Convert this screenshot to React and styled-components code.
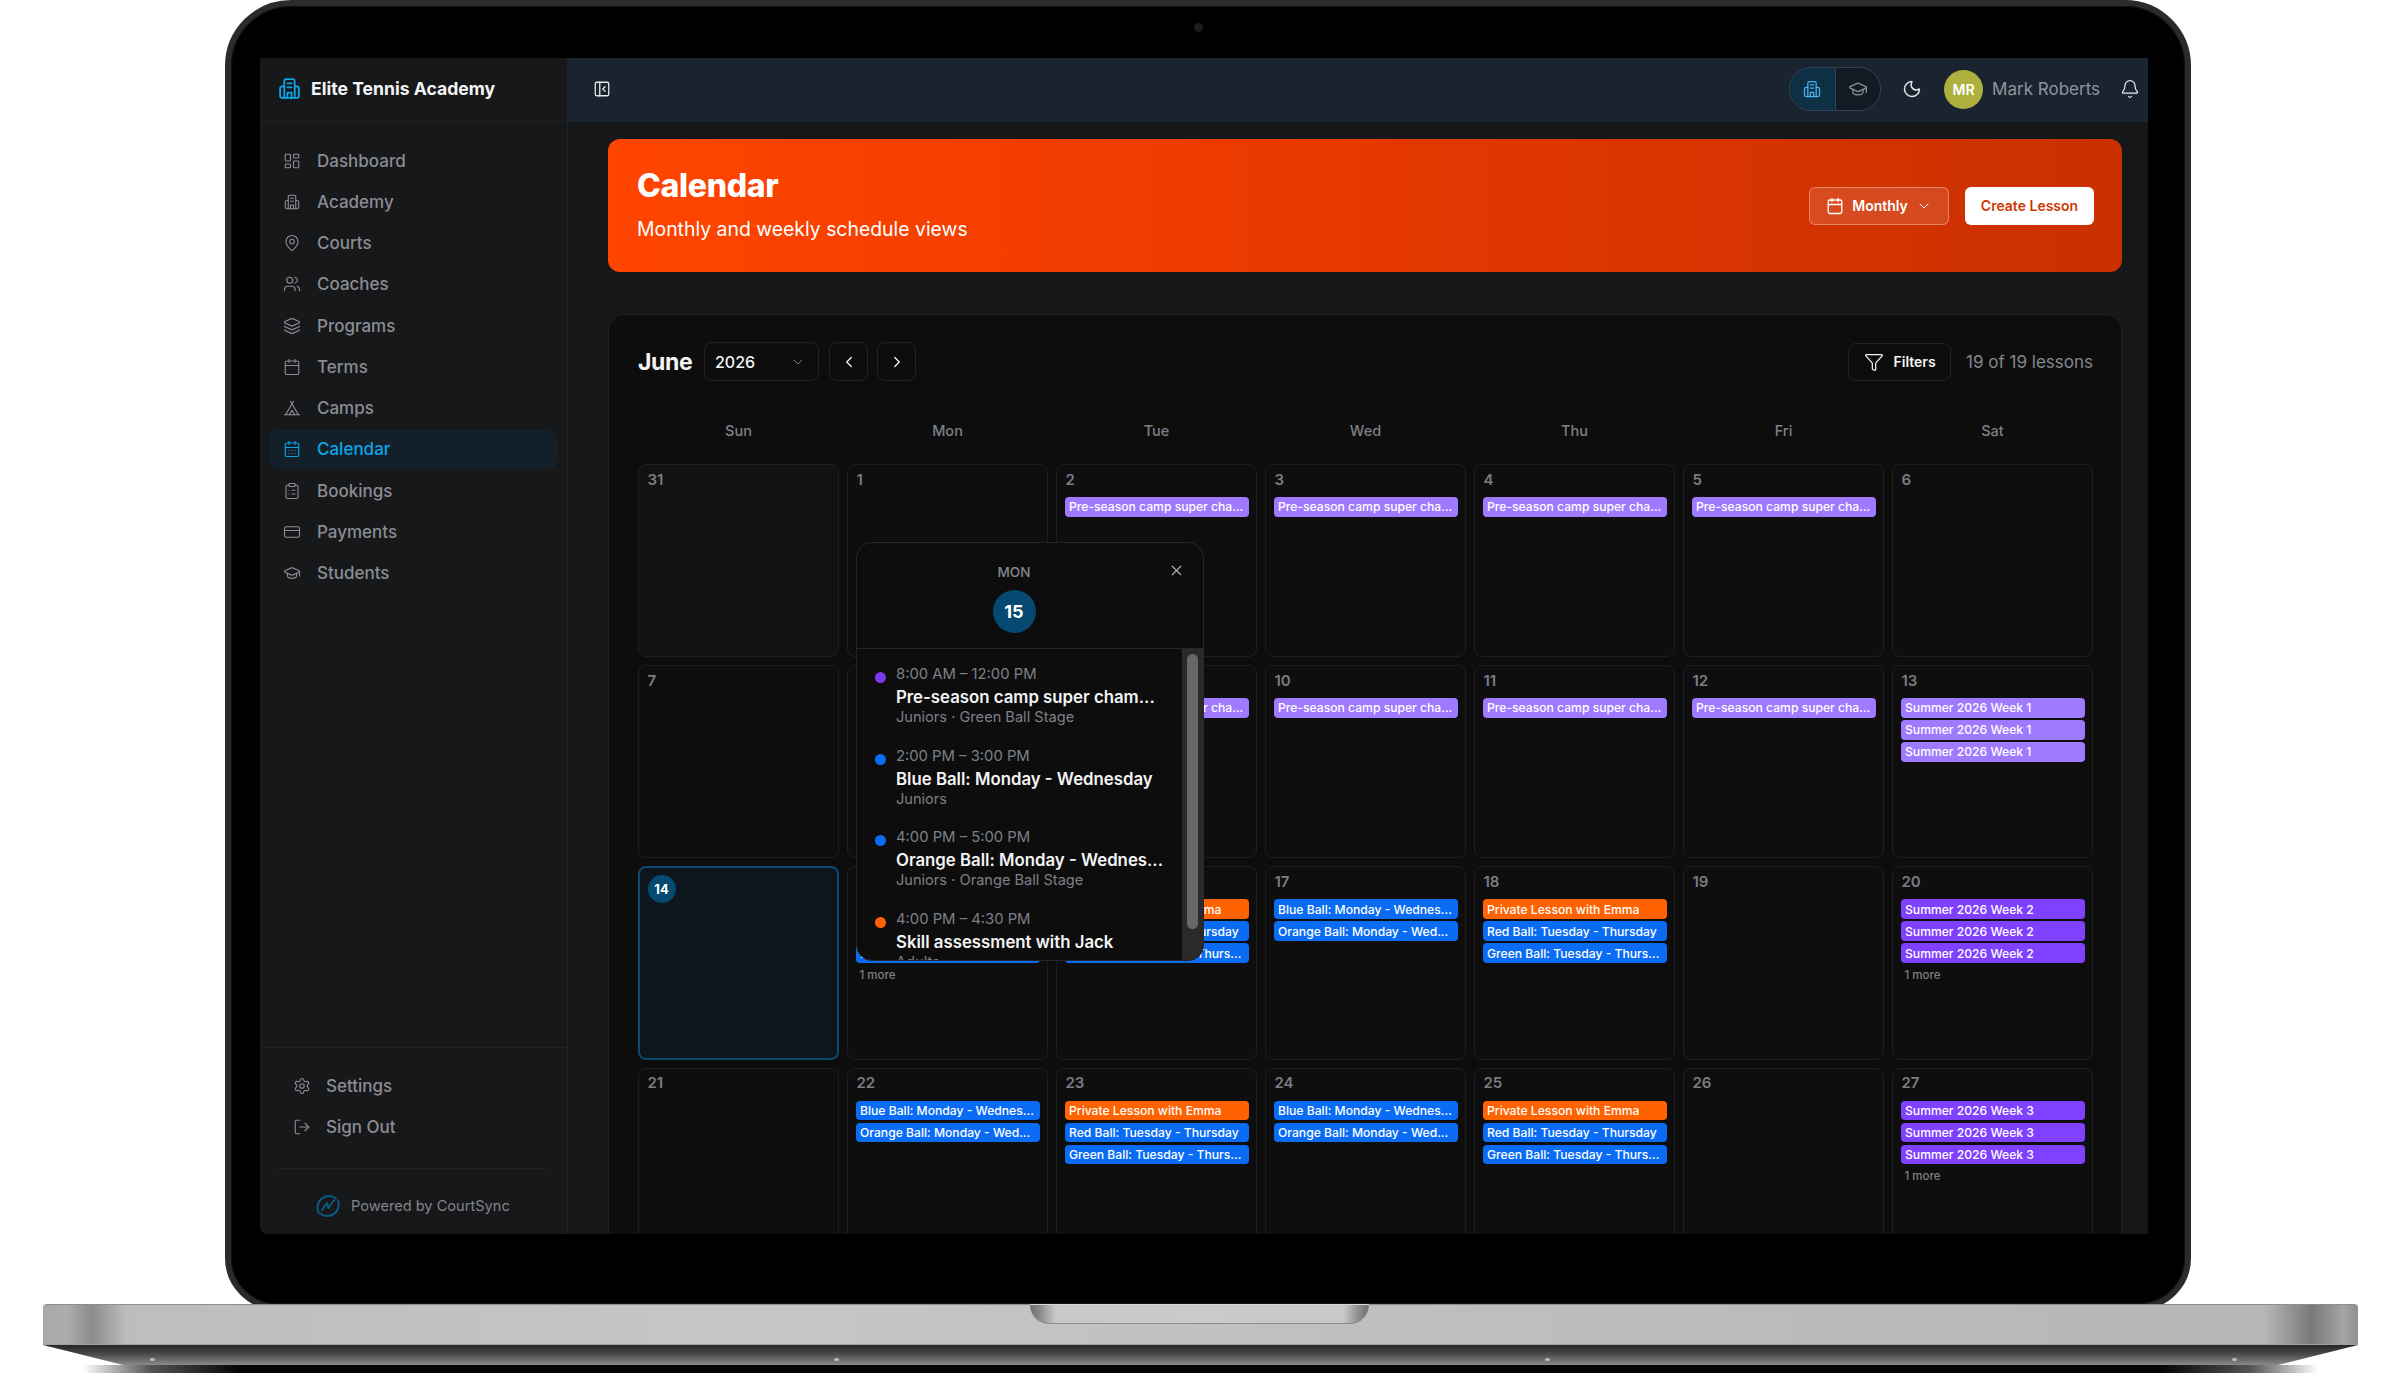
import React from 'react';
import styled, { createGlobalStyle } from 'styled-components';
import {
  LayoutDashboard, MapPin, Users, Layers, Calendar, Tent, CalendarDays, ClipboardList,
  CreditCard, GraduationCap, Settings, LogOut, PanelLeftClose, Moon, Bell, Funnel,
  ChevronDown, ChevronLeft, ChevronRight, X
} from 'lucide-react';

const GlobalStyle = createGlobalStyle`
  html, body {
    margin: 0;
    background: #fff;
    font-family: Inter, 'Noto Sans', sans-serif;
  }
  * { box-sizing: border-box; }
`;

const Stage = styled.div`
  width: 2401px;
  height: 1376px;
  overflow: hidden;
  display: flex;
  flex-direction: column;
  background: #fff;
`;

const Lid = styled.div`
  position: relative;
  margin-left: 225px;
  width: 1966px;
  height: 1310px;
  flex: none;
  background: #000;
  border: 6px solid #2b2b2b;
  border-radius: 66px 66px 52px 52px;
  box-shadow: inset 0 0 0 1px #111;
  padding: 52px 37px 0 29px;
`;

const Camera = styled.div`
  position: absolute;
  left: 963px;
  top: 17px;
  width: 9px;
  height: 9px;
  border-radius: 50%;
  background: #1b1b1d;
`;

const Screen = styled.div`
  width: 1888px;
  height: 1176px;
  display: flex;
  overflow: hidden;
  border-radius: 0 0 0 8px;
  background: #161719;
`;

const Sidebar = styled.aside`
  width: 308px;
  flex: none;
  display: flex;
  flex-direction: column;
  background: #17181a;
  border-right: 1px solid #212224;
`;

const Brand = styled.div`
  height: 64px;
  flex: none;
  display: flex;
  align-items: center;
  gap: 9px;
  padding: 0 0 3px 17px;
  border-bottom: 1px solid #212224;
  color: #0ea5e9;
`;

const BrandName = styled.span`
  color: #f4f4f5;
  font-size: 17.6px;
  font-weight: 700;
`;

const Nav = styled.nav`
  display: flex;
  flex-direction: column;
  gap: 2.25px;
  padding: 19px 10px 0 9px;
`;

const NavItem = styled.div`
  height: 39px;
  display: flex;
  align-items: center;
  gap: 16px;
  padding-left: 14px;
  border-radius: 8px;
  font-size: 17px;
  font-weight: 500;
  color: ${({ $active }) => ($active ? '#0ea5e9' : '#8a8d93')};
  background: ${({ $active }) => ($active ? '#13202a' : 'transparent')};
`;

const SideFooter = styled.div`
  margin-top: auto;
  height: 187px;
  flex: none;
  padding: 18px 19px 0 17px;
  border-top: 1px solid #212224;
`;

const FooterItem = styled.div`
  height: 40px;
  margin-bottom: 1px;
  display: flex;
  align-items: center;
  gap: 15px;
  padding-left: 16px;
  font-size: 17px;
  font-weight: 500;
  color: #8a8d93;
`;

const Powered = styled.div`
  margin-top: 21px;
  padding: 24px 0 0 38px;
  border-top: 1px solid #212224;
  display: flex;
  align-items: center;
  gap: 10px;
  font-size: 14.6px;
  color: #82858b;
`;

const Content = styled.div`
  flex: 1;
  min-width: 0;
  display: flex;
  flex-direction: column;
`;

const Topbar = styled.header`
  height: 64px;
  flex: none;
  display: flex;
  align-items: center;
  padding: 0 8px 2px 25px;
  background: #1a2430;
  color: #e5e7eb;
`;

const Toggle = styled.div`
  margin-left: auto;
  width: 92px;
  height: 44px;
  display: flex;
  overflow: hidden;
  border: 1px solid #334356;
  border-radius: 22px;
`;

const ToggleSide = styled.div`
  flex: 1;
  display: flex;
  align-items: center;
  justify-content: center;
  background: ${({ $active }) => ($active ? '#0e3045' : '#111b24')};
  color: ${({ $active }) => ($active ? '#4fb3ef' : '#8b929a')};
  & + & { border-left: 1px solid #334356; }
`;

const ThemeButton = styled.div`
  margin-left: 21px;
  display: flex;
  color: #e5e7eb;
`;

const Avatar = styled.div`
  margin-left: 22px;
  width: 39px;
  height: 39px;
  border-radius: 50%;
  display: flex;
  align-items: center;
  justify-content: center;
  background: #aeb03e;
  color: #fff;
  font-size: 14px;
  font-weight: 600;
`;

const UserName = styled.span`
  margin-left: 9px;
  font-size: 17px;
  color: #8e949c;
`;

const BellButton = styled.div`
  margin-left: 20px;
  display: flex;
  color: #e5e7eb;
`;

const Main = styled.main`
  flex: 1;
  min-height: 0;
  padding: 17px 26px 0 40px;
`;

const Banner = styled.section`
  height: 133px;
  display: flex;
  align-items: center;
  justify-content: space-between;
  padding: 0 28px 0 29px;
  border-radius: 12px;
  background: linear-gradient(90deg, #ff4500 0%, #f03c00 35%, #d83400 70%, #c93000 100%);
  color: #fff;
`;

const BannerTitle = styled.h1`
  margin: -3px 0 13px;
  font-size: 32px;
  line-height: 36px;
  font-weight: 800;
  letter-spacing: -0.3px;
`;

const BannerSub = styled.p`
  margin: 0;
  font-size: 19.4px;
  line-height: 24px;
`;

const BannerActions = styled.div`
  display: flex;
  gap: 16px;
`;

const ViewButton = styled.div`
  width: 140px;
  height: 38px;
  display: flex;
  align-items: center;
  justify-content: center;
  gap: 8px;
  border: 1px solid rgba(255, 255, 255, 0.32);
  border-radius: 6px;
  background: rgba(255, 255, 255, 0.12);
  font-size: 14px;
  font-weight: 600;
`;

const CreateButton = styled.div`
  width: 129px;
  height: 38px;
  display: flex;
  align-items: center;
  justify-content: center;
  border-radius: 6px;
  background: #fff;
  color: #d23600;
  font-size: 14px;
  font-weight: 600;
`;

const Card = styled.section`
  position: relative;
  margin-top: 42px;
  height: 940px;
  padding: 27px 28px 0 29px;
  background: #0d0d0e;
  border: 1px solid #1e1f21;
  border-radius: 16px;
`;

const Toolbar = styled.div`
  height: 39px;
  display: flex;
  align-items: center;
  color: #f4f4f5;
`;

const Month = styled.h2`
  margin: 0 11px 0 0;
  font-size: 23px;
  font-weight: 700;
  width: 55px;
  letter-spacing: -0.4px;
`;

const YearSelect = styled.div`
  width: 115px;
  height: 39px;
  display: flex;
  align-items: center;
  justify-content: space-between;
  padding: 0 12px 0 10px;
  border: 1px solid #222325;
  border-radius: 8px;
  font-size: 16px;
  font-weight: 500;
  color: #f4f4f5;
  svg { color: #7d8086; }
`;

const NavButton = styled.div`
  width: 39px;
  height: 39px;
  margin-left: ${({ $first }) => ($first ? '10px' : '9px')};
  display: flex;
  align-items: center;
  justify-content: center;
  border: 1px solid #222325;
  border-radius: 8px;
`;

const FilterButton = styled.div`
  margin-left: auto;
  width: 103px;
  height: 38px;
  display: flex;
  align-items: center;
  justify-content: center;
  gap: 10px;
  border: 1px solid #222325;
  border-radius: 8px;
  font-size: 14px;
  font-weight: 600;
`;

const LessonCount = styled.span`
  margin-left: 15px;
  font-size: 17px;
  color: #84878d;
`;

const Weekdays = styled.div`
  display: grid;
  grid-template-columns: repeat(7, 1fr);
  column-gap: 8px;
  margin-top: 32px;
  height: 51px;
`;

const Weekday = styled.div`
  height: 34px;
  display: flex;
  align-items: center;
  justify-content: center;
  font-size: 14.5px;
  font-weight: 500;
  color: #7d8086;
`;

const Grid = styled.div`
  display: grid;
  grid-template-columns: repeat(7, 1fr);
  grid-auto-rows: 193.2px;
  gap: 8px;
`;

const Cell = styled.div`
  padding: 4px 7.5px 0;
  border-radius: 8px;
  border: ${({ $today }) => ($today ? '2px solid #0c4a6e' : '1.5px solid #1d1e20')};
  background: ${({ $today, $muted }) => ($today ? '#0c161c' : $muted ? '#121213' : '#0e0e0f')};
`;

const DayNumber = styled.div`
  height: 20px;
  margin-bottom: 8px;
  padding-left: 1px;
  display: flex;
  align-items: center;
  font-size: 15px;
  font-weight: 600;
  color: #7a7d83;
`;

const TodayNumber = styled.div`
  margin-top: 3px;
  width: 28px;
  height: 28px;
  border-radius: 50%;
  display: flex;
  align-items: center;
  justify-content: center;
  background: #064a72;
  color: #fff;
  font-size: 13px;
  font-weight: 700;
`;

const eventColors = {
  light: '#9f7aff',
  violet: '#7f40ff',
  blue: '#0a6cf5',
  orange: '#ff6200'
};

const Events = styled.div`
  display: flex;
  flex-direction: column;
  gap: 2.5px;
`;

const EventPill = styled.div`
  height: 19.5px;
  padding: 0 4.5px;
  display: flex;
  align-items: center;
  overflow: hidden;
  white-space: nowrap;
  border-radius: 4px;
  background: ${({ $tone }) => eventColors[$tone]};
  color: #fff;
  font-size: 12.15px;
  font-weight: 500;
`;

const More = styled.div`
  margin-top: 5px;
  padding-left: 4px;
  font-size: 11.5px;
  line-height: 15px;
  font-weight: 500;
  color: #7d8086;
`;

const Popover = styled.div`
  position: absolute;
  left: 247px;
  top: 227px;
  width: 348px;
  height: 419px;
  display: flex;
  flex-direction: column;
  overflow: hidden;
  background: #0d0d0e;
  border: 1px solid #252628;
  border-radius: 16px;
`;

const PopoverHead = styled.div`
  position: relative;
  height: 106px;
  flex: none;
  display: flex;
  flex-direction: column;
  align-items: center;
  padding: 20px 32px 0 0;
  border-bottom: 1px solid #252628;
`;

const PopoverDay = styled.div`
  font-size: 13.5px;
  line-height: 18px;
  font-weight: 500;
  color: #84878d;
`;

const PopoverDate = styled.div`
  margin-top: 9px;
  width: 43px;
  height: 43px;
  border-radius: 50%;
  display: flex;
  align-items: center;
  justify-content: center;
  background: #064a72;
  color: #fff;
  font-size: 18px;
  font-weight: 700;
`;

const CloseButton = styled.div`
  position: absolute;
  top: 19px;
  right: 18px;
  display: flex;
  color: #b4b6ba;
`;

const PopoverBody = styled.div`
  flex: 1;
  min-height: 0;
  display: flex;
`;

const LessonList = styled.div`
  flex: 1;
  overflow: hidden;
  display: flex;
  flex-direction: column;
  gap: 19.6px;
  padding: 15px 0 0 18px;
`;

const Lesson = styled.div`
  display: flex;
  gap: 10px;
  flex: none;
`;

const Dot = styled.span`
  flex: none;
  width: 11px;
  height: 11px;
  margin-top: 8px;
  border-radius: 50%;
  background: ${({ $color }) => $color};
`;

const LessonTime = styled.div`
  font-size: 14.8px;
  line-height: 20px;
  color: #7d8086;
`;

const LessonTitle = styled.div`
  margin-top: 3px;
  font-size: 16.8px;
  line-height: 20px;
  font-weight: 600;
  color: #f4f4f5;
  white-space: nowrap;
`;

const LessonGroup = styled.div`
  margin-top: 1px;
  font-size: 14.6px;
  line-height: 18px;
  color: #7d8086;
`;

const ScrollTrack = styled.div`
  width: 21px;
  flex: none;
  padding: 5px;
  background: #2a2a2b;
`;

const ScrollThumb = styled.div`
  height: 275px;
  border-radius: 6px;
  background: #666769;
`;

const Base = styled.div`
  position: relative;
  margin: -6px 0 0 43px;
  width: 2315px;
  flex: none;
`;

const Deck = styled.div`
  position: relative;
  height: 41px;
  border-radius: 4px 4px 0 0;
  border-top: 1px solid #8e8e8e;
  border-bottom: 1px solid #a0a0a0;
  background: linear-gradient(90deg, #a9a9a9 0%, #acacac 1.1%, #8b8b8b 2.1%, #bdbdbd 3.6%, #c6c6c6 30%, #bcbcbc 70%, #b6b6b6 96%, #797979 98%, #a5a5a5 99.4%, #8f8f8f 100%);
`;

const Notch = styled.div`
  position: absolute;
  left: 987px;
  top: -1px;
  width: 339px;
  height: 20px;
  border-radius: 0 0 22px 22px;
  border-top: 1px solid #d8d8d8;
  background: linear-gradient(90deg, #6e6e6e 0%, #8c8c8c 3%, #c8c8c8 7.5%, #cacaca 50%, #c8c8c8 92.5%, #8c8c8c 97%, #6e6e6e 100%);
  box-shadow: inset 0 -1px 0 #8c8c8c;
`;

const Lip = styled.div`
  position: relative;
  height: 20px;
  clip-path: polygon(0 0, 100% 0, calc(100% - 80px) 100%, 80px 100%);
  background: linear-gradient(180deg, #262626 0%, #4a4a4a 45%, #8a8a8a 100%);
`;

const Screw = styled.span`
  position: absolute;
  top: 13px;
  left: ${({ $x }) => $x}px;
  width: 5px;
  height: 3px;
  border-radius: 2px;
  background: #b8b8b8;
`;

const Foot = styled.div`
  height: 8px;
  margin: 0 40px;
  background: linear-gradient(90deg, #ffffff 0%, #555 3%, #050505 7%, #050505 93%, #555 97%, #ffffff 100%);
`;

const BuildingIcon = ({ size = 18, strokeWidth = 1.5 }) => (
  <svg width={size} height={size} viewBox="0 0 24 24" fill="none" stroke="currentColor" strokeWidth={strokeWidth} strokeLinecap="round" strokeLinejoin="round">
    <path d="M7 21V5a2 2 0 0 1 2-2h6a2 2 0 0 1 2 2v16" />
    <path d="M7 10H5a2 2 0 0 0-2 2v7a2 2 0 0 0 2 2h14a2 2 0 0 0 2-2v-7a2 2 0 0 0-2-2h-2" />
    <path d="M10 7h4M10 11h4M10 21v-5h4v5" />
  </svg>
);

const CourtSyncLogo = () => (
  <svg width="26" height="26" viewBox="0 0 26 26" fill="none" stroke="#0b5a85" strokeWidth="2" strokeLinecap="round" strokeLinejoin="round">
    <path d="M21 5.5A11.5 11.5 0 0 0 3.6 19.6" />
    <path d="M5 20.5A11.5 11.5 0 0 0 23 7.5" />
    <path d="M7 17l5-7 1.5 5 5.5-8" />
  </svg>
);

const navItems = [
  ['Dashboard', LayoutDashboard],
  ['Academy', BuildingIcon],
  ['Courts', MapPin],
  ['Coaches', Users],
  ['Programs', Layers],
  ['Terms', Calendar],
  ['Camps', Tent],
  ['Calendar', CalendarDays, true],
  ['Bookings', ClipboardList],
  ['Payments', CreditCard],
  ['Students', GraduationCap]
];

const pre = ['light', 'Pre-season camp super cha...'];
const blue = ['blue', 'Blue Ball: Monday - Wednes...'];
const orangeBall = ['blue', 'Orange Ball: Monday - Wed...'];
const priv = ['orange', 'Private Lesson with Emma'];
const red = ['blue', 'Red Ball: Tuesday - Thursday'];
const green = ['blue', 'Green Ball: Tuesday - Thurs...'];
const week = (n, tone) => Array(3).fill([tone, `Summer 2026 Week ${n}`]);

const days = [
  { n: 31, muted: true }, { n: 1 }, { n: 2, ev: [pre] }, { n: 3, ev: [pre] }, { n: 4, ev: [pre] }, { n: 5, ev: [pre] }, { n: 6 },
  { n: 7 }, { n: 8, ev: [pre] }, { n: 9, ev: [pre] }, { n: 10, ev: [pre] }, { n: 11, ev: [pre] }, { n: 12, ev: [pre] }, { n: 13, ev: week(1, 'light') },
  { n: 14, today: true }, { n: 15, ev: [blue, orangeBall, blue], more: 1 }, { n: 16, ev: [priv, red, green] }, { n: 17, ev: [blue, orangeBall] }, { n: 18, ev: [priv, red, green] }, { n: 19 }, { n: 20, ev: week(2, 'violet'), more: 1 },
  { n: 21 }, { n: 22, ev: [blue, orangeBall] }, { n: 23, ev: [priv, red, green] }, { n: 24, ev: [blue, orangeBall] }, { n: 25, ev: [priv, red, green] }, { n: 26 }, { n: 27, ev: week(3, 'violet'), more: 1 }
];

const lessons = [
  { color: '#7c3aed', time: '8:00 AM – 12:00 PM', title: 'Pre-season camp super cham...', group: 'Juniors · Green Ball Stage' },
  { color: '#0a6cf5', time: '2:00 PM – 3:00 PM', title: 'Blue Ball: Monday - Wednesday', group: 'Juniors' },
  { color: '#0a6cf5', time: '4:00 PM – 5:00 PM', title: 'Orange Ball: Monday - Wednes...', group: 'Juniors · Orange Ball Stage' },
  { color: '#ff6200', time: '4:00 PM – 4:30 PM', title: 'Skill assessment with Jack', group: 'Adults' }
];

const App = () => (
  <>
    <GlobalStyle />
    <Stage>
      <Lid>
        <Camera />
        <Screen>
          <Sidebar>
            <Brand>
              <BuildingIcon size={25} strokeWidth={1.75} />
              <BrandName>Elite Tennis Academy</BrandName>
            </Brand>
            <Nav>
              {navItems.map(([label, Icon, active]) => (
                <NavItem key={label} $active={active}>
                  <Icon size={18} strokeWidth={1.5} />
                  {label}
                </NavItem>
              ))}
            </Nav>
            <SideFooter>
              <FooterItem><Settings size={18} strokeWidth={1.5} />Settings</FooterItem>
              <FooterItem><LogOut size={18} strokeWidth={1.5} />Sign Out</FooterItem>
              <Powered><CourtSyncLogo />Powered by CourtSync</Powered>
            </SideFooter>
          </Sidebar>
          <Content>
            <Topbar>
              <PanelLeftClose size={18} strokeWidth={1.75} />
              <Toggle>
                <ToggleSide $active><BuildingIcon size={20} /></ToggleSide>
                <ToggleSide><GraduationCap size={20} strokeWidth={1.5} /></ToggleSide>
              </Toggle>
              <ThemeButton><Moon size={20} strokeWidth={1.75} /></ThemeButton>
              <Avatar>MR</Avatar>
              <UserName>Mark Roberts</UserName>
              <BellButton><Bell size={20} strokeWidth={1.5} /></BellButton>
            </Topbar>
            <Main>
              <Banner>
                <div>
                  <BannerTitle>Calendar</BannerTitle>
                  <BannerSub>Monthly and weekly schedule views</BannerSub>
                </div>
                <BannerActions>
                  <ViewButton>
                    <Calendar size={18} strokeWidth={1.75} />
                    Monthly
                    <ChevronDown size={16} strokeWidth={1.5} />
                  </ViewButton>
                  <CreateButton>Create Lesson</CreateButton>
                </BannerActions>
              </Banner>
              <Card>
                <Toolbar>
                  <Month>June</Month>
                  <YearSelect>2026<ChevronDown size={16} strokeWidth={1.5} /></YearSelect>
                  <NavButton $first><ChevronLeft size={18} strokeWidth={1.75} /></NavButton>
                  <NavButton><ChevronRight size={18} strokeWidth={1.75} /></NavButton>
                  <FilterButton><Funnel size={20} strokeWidth={1.5} />Filters</FilterButton>
                  <LessonCount>19 of 19 lessons</LessonCount>
                </Toolbar>
                <Weekdays>
                  {['Sun', 'Mon', 'Tue', 'Wed', 'Thu', 'Fri', 'Sat'].map((d) => (
                    <Weekday key={d}>{d}</Weekday>
                  ))}
                </Weekdays>
                <Grid>
                  {days.map((day) => (
                    <Cell key={day.n} $today={day.today} $muted={day.muted}>
                      {day.today ? <TodayNumber>{day.n}</TodayNumber> : <DayNumber>{day.n}</DayNumber>}
                      {day.ev && (
                        <Events>
                          {day.ev.map(([tone, label], i) => (
                            <EventPill key={i} $tone={tone}>{label}</EventPill>
                          ))}
                        </Events>
                      )}
                      {day.more && <More>{day.more} more</More>}
                    </Cell>
                  ))}
                </Grid>
                <Popover>
                  <PopoverHead>
                    <PopoverDay>MON</PopoverDay>
                    <PopoverDate>15</PopoverDate>
                    <CloseButton><X size={17} strokeWidth={1.5} /></CloseButton>
                  </PopoverHead>
                  <PopoverBody>
                    <LessonList>
                      {lessons.map((l) => (
                        <Lesson key={l.time}>
                          <Dot $color={l.color} />
                          <div>
                            <LessonTime>{l.time}</LessonTime>
                            <LessonTitle>{l.title}</LessonTitle>
                            <LessonGroup>{l.group}</LessonGroup>
                          </div>
                        </Lesson>
                      ))}
                    </LessonList>
                    <ScrollTrack><ScrollThumb /></ScrollTrack>
                  </PopoverBody>
                </Popover>
              </Card>
            </Main>
          </Content>
        </Screen>
      </Lid>
      <Base>
        <Deck><Notch /></Deck>
        <Lip>
          <Screw $x={107} />
          <Screw $x={791} />
          <Screw $x={1502} />
          <Screw $x={2189} />
        </Lip>
        <Foot />
      </Base>
    </Stage>
  </>
);

export default App;
